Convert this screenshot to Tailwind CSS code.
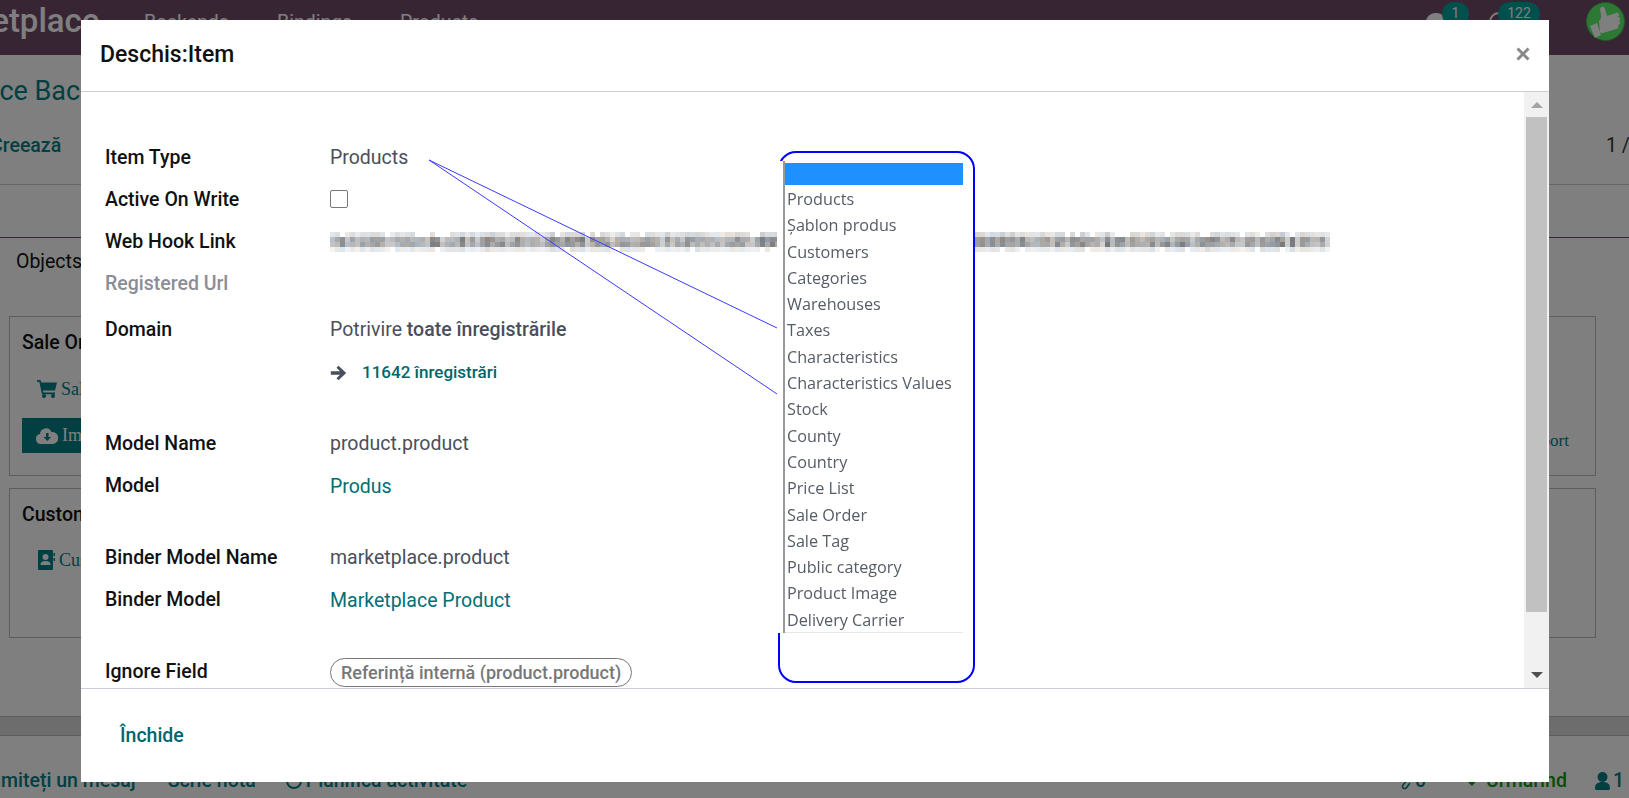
<!DOCTYPE html>
<html lang="ro">
<head>
  <meta charset="UTF-8" />
  <title>Deschis:Item</title>
  <script src="https://cdn.jsdelivr.net/npm/@tailwindcss/browser@4"></script>
</head>
<body class="font-['Roboto',sans-serif] overflow-hidden">

<div class="relative h-[798px] w-[1629px] overflow-hidden bg-white flex flex-col">

  <!-- Pagina din spate -->
  <header class="h-[55px] shrink-0 bg-[#714b67] text-white flex items-start overflow-hidden">
    <span class="ml-[-84px] w-[228px] shrink-0 text-[33px] leading-[41px] font-medium whitespace-nowrap">Marketplace</span>
    <nav class="flex gap-[32px] text-[19.500px] leading-[24px] pt-[11px]">
      <span class="w-[101px]">Backends</span>
      <span class="w-[91px]">Bindings</span>
      <span>Products</span>
    </nav>
    <div class="ml-auto flex items-start relative h-full">
      <span class="absolute left-[-160px] top-[13px] w-[20px] h-[18px] rounded-full bg-white"></span>
      <span class="absolute left-[-144px] top-[2px] w-[27px] h-[24px] rounded-full bg-[#00a09d] text-[14px] leading-[22px] text-center">1</span>
      <span class="absolute left-[-97px] top-[12px] w-[20px] h-[20px] rounded-full border-2 border-white"></span>
      <span class="absolute left-[-88px] top-[2px] w-[42px] h-[24px] rounded-full bg-[#00a09d] text-[14px] leading-[22px] text-center">122</span>
      <svg class="mr-[4px] mt-[2px]" width="39" height="39" viewBox="0 0 39 39">
        <circle cx="19.500" cy="19.500" r="19" fill="#5cf06a" stroke="#3cb54a" stroke-width="1" />
        <path d="M4 24l7-3 4 12-6 3zM13 19c3-2 2-6 1-12 1-3 4-3 5 0l2 7 9-3c3-1 4 2 2 4 2 0 3 3 1 4 2 1 1 4-1 4 1 2 0 4-2 4l-13 4c-1 0-2 0-3-1z" fill="#fff" />
      </svg>
    </div>
  </header>

  <section class="h-[130px] shrink-0 border-b border-[#ccc] relative">
    <div class="ml-[-121px] mt-[16px] text-[27px] leading-[40px] text-[#017e84] whitespace-nowrap">Marketplace Backend</div>
    <div class="mt-[23px] flex justify-between items-center">
      <span class="ml-[-10px] text-[19.500px] leading-[24px] font-medium text-[#017e84]">Creează</span>
      <span class="text-[19.500px] leading-[24px] text-[#333] w-[23px] whitespace-nowrap overflow-hidden">1 / 1</span>
    </div>
  </section>

  <div class="h-[53px] shrink-0 border-b border-[#714b67]"></div>

  <section class="flex-1 flex flex-col overflow-hidden">
    <div class="h-[78px] shrink-0 pl-[16px] pt-[12px] text-[19.500px] leading-[24px] text-[#111]">Objects</div>

    <div class="h-[160px] shrink-0 mx-[9px] w-[1587px] border border-[#bbb] flex flex-col pl-[12px]">
      <div class="mt-[14px] text-[19.500px] leading-[24px] font-medium text-[#111]">Sale Orders</div>
      <div class="mt-[23px] flex items-center gap-[4px] ml-[15px] font-['Liberation_Serif',serif] text-[18px] leading-[22px] text-[#017e84]">
        <svg width="20" height="18" viewBox="0 0 20 18" fill="#017e84"><path d="M0 0h3.500l.8 2.500H20l-2 8H6l.4 2H18v1.800H5L2.300 1.800H0z" /><circle cx="7" cy="16" r="2" /><circle cx="16" cy="16" r="2" /></svg>
        Sale Orders
      </div>
      <div class="mt-[18px] flex items-center justify-between">
        <span class="h-[35px] w-[130px] bg-[#017e84] text-white flex items-center gap-[4px] pl-[14px] font-['Liberation_Serif',serif] text-[18px]">
          <svg width="22" height="17" viewBox="0 0 22 17" fill="#fff"><path d="M5 17a5 5 0 0 1-1-9.900A6 6 0 0 1 15.500 5 5.500 5.500 0 0 1 17 17z" /><path d="M10 6h2.500v4H15l-3.700 4-3.700-4H10z" fill="#017e84" /></svg>
          Import
        </span>
        <span class="mr-[26px] pt-[10px] font-['Liberation_Serif',serif] text-[17px] text-[#017e84]">Export</span>
      </div>
    </div>

    <div class="h-[150px] shrink-0 mt-[12px] mx-[9px] w-[1587px] border border-[#bbb] flex flex-col pl-[12px]">
      <div class="mt-[14px] text-[19.500px] leading-[24px] font-medium text-[#111]">Customers</div>
      <div class="mt-[22px] flex items-center gap-[4px] ml-[15px] font-['Liberation_Serif',serif] text-[18px] leading-[22px] text-[#017e84]">
        <svg width="18" height="20" viewBox="0 0 18 20" fill="#017e84"><path d="M2 0h13a1 1 0 0 1 1 1v18a1 1 0 0 1-1 1H2a1 1 0 0 1-1-1V1a1 1 0 0 1 1-1z" /><rect x="16.500" y="3" width="1.500" height="3" /><rect x="16.500" y="8" width="1.500" height="3" /><circle cx="8.500" cy="7" r="3" fill="#fff" /><path d="M3.500 15c0-3 2-4 5-4s5 1 5 4z" fill="#fff" /></svg>
        Customers
      </div>
    </div>

    <div class="mt-[78px] h-[20px] shrink-0 bg-[#dadada] border-y border-[#bbb]"></div>

    <div class="flex-1 flex items-start pt-[33px] text-[19.500px] leading-[24px] font-medium relative">
      <span class="ml-[-22px] whitespace-nowrap text-[#017e84]">Trimiteți un mesaj</span>
      <span class="ml-[32px] whitespace-nowrap text-[#017e84]">Scrie notă</span>
      <span class="ml-[30px] whitespace-nowrap text-[#017e84] flex items-center gap-[4px]">
        <svg width="16" height="16" viewBox="0 0 16 16" fill="none" stroke="#017e84" stroke-width="2"><circle cx="8" cy="8" r="7" /></svg>
        Planifică activitate
      </span>
      <span class="ml-auto text-[#017e84] whitespace-nowrap mr-[5px] flex items-center">
        <svg class="mr-[4px]" width="12" height="18" viewBox="0 0 12 18" fill="none" stroke="#017e84" stroke-width="1.500"><path d="M10 6l-6 7c-2 3 2 5 4 2l3-4" /></svg>
        <span class="mr-[41px]">0</span>
        <svg class="mr-[7px]" width="12" height="10" viewBox="0 0 12 10" fill="#0f9a0f"><path d="M0 5l2-2 3 3 5-6 2 2-7 8z" /></svg>
        <span class="text-[#0f9a0f] mr-[28px]">Urmărind</span>
        <svg class="mr-[3px]" width="15" height="18" viewBox="0 0 15 18" fill="#017e84"><circle cx="7.500" cy="5" r="5" /><path d="M0 17c0-5 2-7 7.500-7s7.500 2 7.500 7l-1 1H1z" /></svg>
        1
      </span>
    </div>
  </section>

  <!-- Fundal dialog -->
  <div class="absolute inset-0 bg-black/50"></div>

  <!-- Dialog -->
  <div class="absolute left-[81px] top-[20px] w-[1468px] h-[762px] bg-white flex flex-col">
    <div class="h-[72px] shrink-0 border-b border-[#ccccd4] flex items-center justify-between pl-[19px] pr-[19px]">
      <h4 class="text-[23px] font-medium text-[#111]">Deschis:Item</h4>
      <svg class="mb-[3px]" width="14" height="14" viewBox="0 0 14 14" stroke="#888" stroke-width="3"><path d="M1.500 1.500l11 11M12.500 1.500l-11 11" /></svg>
    </div>

    <div class="h-[596px] shrink-0 flex">
      <div class="flex-1 overflow-hidden pl-[24px] pt-[45px] text-[19.500px] text-[#4a4f5c]">
        <div class="grid grid-cols-[225px_1fr] auto-rows-[42px] items-center">
          <label class="font-medium text-[#111]">Item Type</label>
          <div>Products</div>
          <label class="font-medium text-[#111]">Active On Write</label>
          <div class="mt-[-2px]"><span class="block w-[18px] h-[18px] border border-[#777] rounded-[2px]"></span></div>
          <label class="font-medium text-[#111]">Web Hook Link</label>
          <div><svg id="blur-link" class="block" width="1003" height="20"></svg></div>
          <label class="font-medium text-[#8b8d96]">Registered Url</label>
          <div></div>
        </div>

        <div class="mt-[4px] grid grid-cols-[225px_1fr] auto-rows-[42px] items-center">
          <label class="font-medium text-[#111]">Domain</label>
          <div>Potrivire <span class="font-medium">toate înregistrările</span></div>
          <div></div>
          <div class="flex items-center gap-[15px] mt-[1px]">
            <svg width="17" height="16" viewBox="0 0 17 16" fill="#4a4f5c"><path d="M8.500 .8l7.700 7.200-7.700 7.200-2-2 3.500-3.500H.8V6.300H10L6.500 2.800z" /></svg>
            <span class="text-[17px] font-medium text-[#01666b]">11642 înregistrări</span>
          </div>
        </div>

        <div class="mt-[30px] grid grid-cols-[225px_1fr] auto-rows-[42px] items-center">
          <label class="font-medium text-[#111]">Model Name</label>
          <div>product.product</div>
          <label class="font-medium text-[#111]">Model</label>
          <a class="text-[#016f74] pt-[2px]">Produs</a>
        </div>

        <div class="mt-[30px] grid grid-cols-[225px_1fr] auto-rows-[42px] items-center">
          <label class="font-medium text-[#111]">Binder Model Name</label>
          <div>marketplace.product</div>
          <label class="font-medium text-[#111]">Binder Model</label>
          <a class="text-[#016f74] pt-[2px]">Marketplace Product</a>
        </div>

        <div class="mt-[30px] grid grid-cols-[225px_1fr] auto-rows-[42px] items-center">
          <label class="font-medium text-[#111]">Ignore Field</label>
          <div><span class="block w-fit h-[29px] mt-[1px] px-[10px] leading-[27px] rounded-full border border-[#777] text-[18px] font-medium text-[#777]">Referință internă (product.product)</span></div>
        </div>
      </div>

      <!-- Bara de derulare -->
      <div class="w-[25px] shrink-0 bg-[#f1f1f1] flex flex-col items-center">
        <span class="mt-[10px] w-0 h-0 border-x-[6px] border-x-transparent border-b-[6px] border-b-[#a3a3a3]"></span>
        <span class="mt-[9px] w-[21px] h-[495px] bg-[#c1c1c1]"></span>
        <span class="mt-[60px] w-0 h-0 border-x-[6px] border-x-transparent border-t-[6px] border-t-[#505050]"></span>
      </div>
    </div>

    <div class="flex-1 border-t border-[#ccccd4] pl-[39px] pt-[34px]">
      <span class="text-[19.500px] leading-[26px] font-medium text-[#01666b]">Închide</span>
    </div>
  </div>

  <!-- Adnotare: lista deschisa -->
  <div class="absolute left-[778px] top-[151px] w-[197px] h-[532px] bg-white border-2 border-[#0000ff] rounded-[18px]"></div>
  <div class="absolute left-[777px] top-[161px] w-[186px] h-[472px] bg-white flex">
    <div class="ml-[6px] w-[2px] bg-[#999]"></div>
    <div class="flex-1 pt-[2px] border-b border-[#e8e8e8] font-['Open_Sans',sans-serif] text-[16.200px] text-[#555c66] blur-[0.5px] whitespace-nowrap">
      <div class="h-[22px] bg-[#1e90ff]"></div>
      <ul class="pl-[2px]">
        <li class="h-[26.300px] leading-[29px]">Products</li>
        <li class="h-[26.300px] leading-[29px]">Șablon produs</li>
        <li class="h-[26.300px] leading-[29px]">Customers</li>
        <li class="h-[26.300px] leading-[29px]">Categories</li>
        <li class="h-[26.300px] leading-[29px]">Warehouses</li>
        <li class="h-[26.300px] leading-[29px]">Taxes</li>
        <li class="h-[26.300px] leading-[29px]">Characteristics</li>
        <li class="h-[26.300px] leading-[29px]">Characteristics Values</li>
        <li class="h-[26.300px] leading-[29px]">Stock</li>
        <li class="h-[26.300px] leading-[29px]">County</li>
        <li class="h-[26.300px] leading-[29px]">Country</li>
        <li class="h-[26.300px] leading-[29px]">Price List</li>
        <li class="h-[26.300px] leading-[29px]">Sale Order</li>
        <li class="h-[26.300px] leading-[29px]">Sale Tag</li>
        <li class="h-[26.300px] leading-[29px]">Public category</li>
        <li class="h-[26.300px] leading-[29px]">Product Image</li>
        <li class="h-[26.300px] leading-[29px]">Delivery Carrier</li>
      </ul>
    </div>
  </div>

  <!-- Adnotare: liniile albastre -->
  <svg class="absolute left-0 top-0 pointer-events-none" width="777" height="400">
    <path d="M429 160L777 328M429 160L777 394" stroke="#3a3aff" stroke-width="1" fill="none" />
  </svg>
</div>

<script>
  // Linkul ascuns: mozaic de patratele, ca in captura
  const svg = document.getElementById('blur-link');
  const NS = 'http://www.w3.org/2000/svg';
  let seed = 41;
  const rnd = () => (seed = (seed * 16807) % 2147483647) / 2147483647;
  const rows = [[0.8, 215], [1, 150], [1, 150], [0.9, 228]];
  for (let c = 0; c < 200; c++) {
    // fiecare coloana are alta intensitate, ca literele sub mozaic
    const ink = rnd();
    rows.forEach((row, r) => {
      if (rnd() > row[0]) return;
      const grey = 255 - (255 - row[1]) * (0.5 + ink * 0.6) * (0.8 + rnd() * 0.4);
      const tint = (rnd() - 0.4) * 14;
      const rect = document.createElementNS(NS, 'rect');
      rect.setAttribute('x', c * 5);
      rect.setAttribute('y', r * 5);
      rect.setAttribute('width', 5);
      rect.setAttribute('height', 5);
      rect.setAttribute('fill', `rgb(${grey - tint},${grey},${grey + tint})`);
      svg.appendChild(rect);
    });
  }
</script>

</body>
</html>
